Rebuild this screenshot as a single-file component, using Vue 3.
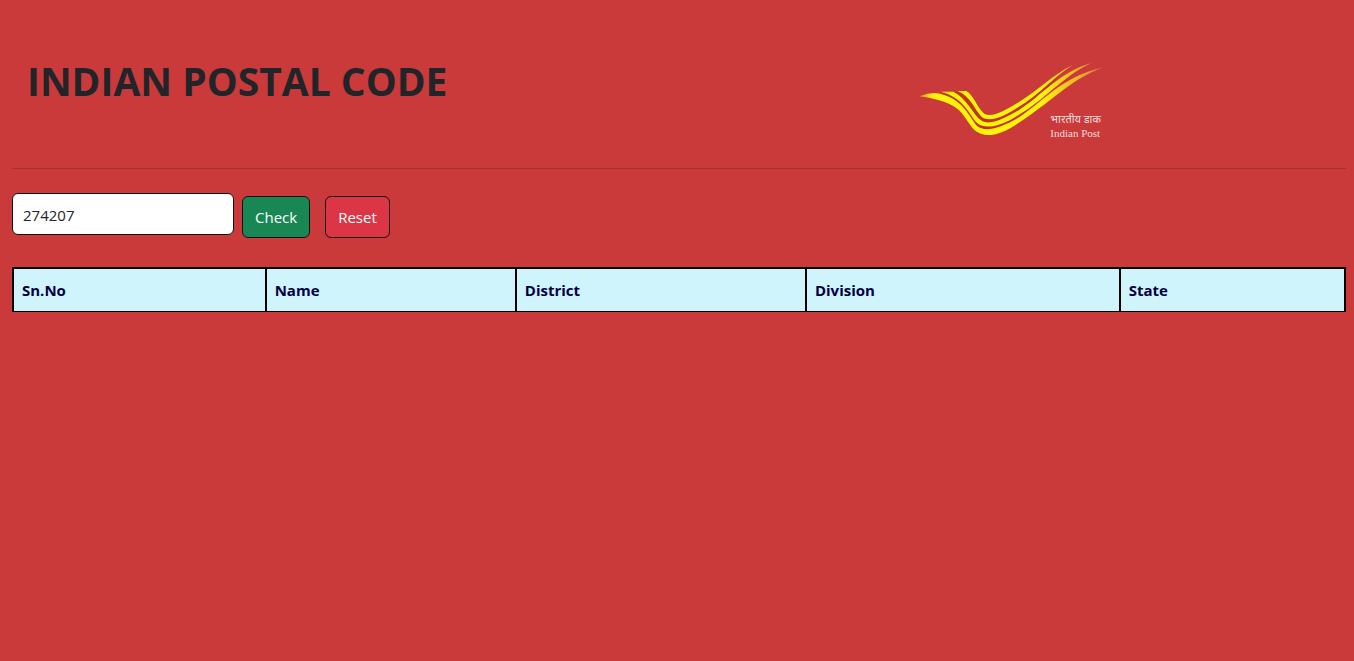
<script setup>
import { ref } from 'vue'

const pin = ref('274207')
const offices = ref([])
const columns = [
  { label: 'Sn.No', cls: 'c-sn' },
  { label: 'Name', cls: 'c-name' },
  { label: 'District', cls: 'c-district' },
  { label: 'Division', cls: 'c-division' },
  { label: 'State', cls: 'c-state' },
]

function reset() {
  pin.value = ''
  offices.value = []
}
</script>

<template>
  <div class="page">
    <header class="top">
      <h1>INDIAN POSTAL CODE</h1>
      <svg class="logo" viewBox="0 0 630 285" role="img" aria-label="Indian Post">
        <defs>
          <linearGradient id="wing" gradientUnits="userSpaceOnUse" x1="30" y1="0" x2="585" y2="0">
            <stop offset="0" stop-color="#f0a020" />
            <stop offset="0.08" stop-color="#fff30c" />
            <stop offset="0.66" stop-color="#fff30c" />
            <stop offset="0.84" stop-color="#eebc24" />
            <stop offset="1" stop-color="#dc7a30" />
          </linearGradient>
        </defs>
        <path class="shade" d="M90 116 L148 108 L170 109 C190 120 212 182 245 182 C300 180 350 135 400 95 L440 62 L440 95 C400 125 350 175 290 215 C250 230 212 225 190 200 C165 160 140 130 90 116Z" />
        <path fill="url(#wing)" d="M32 124 Q55 114 78 114 C160 124 180 185 205 214 C230 233 275 218 330 187 C415 130 460 65 583 37 C480 75 425 144 325 206 C270 244 225 250 197 226 C177 206 165 175 142 159 C115 140 75 130 32 124Z" />
        <path fill="url(#wing)" d="M96 110 L133 110 C172 128 192 178 216 196 C240 212 280 195 330 165 C400 120 450 52 547 24 C460 64 405 138 325 182 C275 214 230 224 205 205 C180 178 165 128 96 110Z" />
        <path fill="url(#wing)" d="M145 108 L172 108 C195 122 205 160 227 177 C250 189 290 166 330 141 C390 104 430 60 492 29 C430 68 395 117 325 158 C280 188 240 202 218 186 C196 162 182 120 145 108Z" />
        <text x="424" y="203" class="hindi">भारतीय डाक</text>
        <text x="424" y="247" class="latin">Indian Post</text>
      </svg>
    </header>
    <hr />
    <form class="search" @submit.prevent>
      <input v-model="pin" type="text" aria-label="Postal code" />
      <button type="submit" class="check">Check</button>
      <button type="button" class="reset" @click="reset">Reset</button>
    </form>
    <table>
      <thead>
        <tr>
          <th v-for="c in columns" :key="c.label" :class="c.cls" scope="col">{{ c.label }}</th>
        </tr>
      </thead>
      <tbody>
        <tr v-for="(o, i) in offices" :key="i">
          <td>{{ i + 1 }}</td>
          <td>{{ o.name }}</td>
          <td>{{ o.district }}</td>
          <td>{{ o.division }}</td>
          <td>{{ o.state }}</td>
        </tr>
      </tbody>
    </table>
  </div>
</template>

<style>
body {
  background: #ca3a3a;
}
</style>

<style scoped>
.page {
  padding: 55px 8px 24px 12px;
  font-family: "Open Sans", "Noto Sans", sans-serif;
  font-size: 15px;
  line-height: 24px;
  color: #212529;
}
.top {
  display: grid;
  grid-template-columns: 2fr 1fr;
  align-items: start;
}
h1 {
  margin: 0;
  padding-left: 15px;
  font-size: 39px;
  line-height: 52px;
  font-weight: 700;
}
.logo {
  width: 210px;
  height: 95px;
  margin-left: 8px;
}
.shade {
  fill: #bf3414;
}
.hindi,
.latin {
  fill: #f8dcdc;
  font-family: "Liberation Serif", "Noto Sans", serif;
  font-size: 33px;
}
hr {
  margin: 18px 0 24px;
  border: 0;
  border-top: 1px solid #a53034;
}
.search {
  display: flex;
  align-items: flex-start;
}
input,
button {
  box-sizing: border-box;
  height: 42px;
  border: 1px solid #111;
  border-radius: 6px;
  font: inherit;
}
input {
  width: 222px;
  padding: 2px 10px 0;
  background: #fff;
  color: #212529;
}
button {
  margin-top: 3px;
  padding: 0 12px;
  color: #fff;
}
.check {
  margin-left: 8px;
  background: #198754;
}
.reset {
  margin-left: 15px;
  background: #dc3545;
}
table {
  width: 100%;
  margin-top: 29px;
  border-collapse: collapse;
  table-layout: fixed;
}
th,
td {
  padding: 9px 8px;
  border: 2px solid #000;
  border-bottom-width: 1px;
  background: #cff4fc;
  color: #000040;
  text-align: left;
}
.c-sn { width: 18.9%; }
.c-name { width: 18.7%; }
.c-district { width: 21.9%; }
.c-division { width: 23.8%; }
.c-state { width: 16.7%; }
</style>
